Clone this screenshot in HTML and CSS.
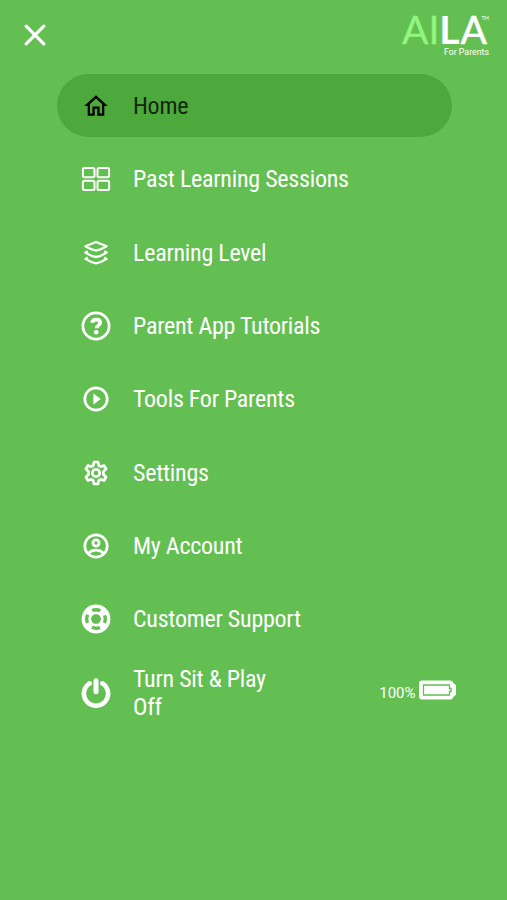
FILE: index.html
```html
<!DOCTYPE html>
<html lang="en">
<head>
  <meta charset="UTF-8">
  <meta name="viewport" content="width=device-width, initial-scale=1.0">
  <title>AILA For Parents</title>
  <link rel="stylesheet" href="styles.css">
</head>
<body>
  <!-- Header -->
  <header>
    <button class="close" aria-label="Close menu">
      <svg width="22" height="22" viewBox="0 0 22 22"><path d="M2.2 2.2l17.6 17.6M19.8 2.2L2.2 19.8" /></svg>
    </button>
    <div class="logo">
      <div class="logo-name"><span class="logo-ai">AI</span><span class="logo-l">L</span><span class="logo-a">A</span><span class="tm">TM</span></div>
      <div class="logo-sub">For Parents</div>
    </div>
  </header>

  <!-- Menu -->
  <nav>
    <a class="item active" href="#">
      <svg class="icon" viewBox="0 0 30 30"><path class="fill" fill-rule="evenodd" d="M15 4.3L3.2 15h3.5v9.8h7v-7h2.6v7h7V15h3.5zM15 7.5l6 5.4v9.6h-2.4v-7h-7.2v7H9v-9.6z" /></svg>
      <span class="label">Home</span>
    </a>
    <a class="item" href="#">
      <svg class="icon" viewBox="0 0 30 30">
        <g class="line thin">
          <rect x="1.9" y="4" width="11.6" height="9.2" rx="1.5" />
          <rect x="16.5" y="4" width="11.6" height="9.2" rx="1.5" />
          <rect x="1.9" y="16.7" width="11.6" height="9.2" rx="1.5" />
          <rect x="16.5" y="16.7" width="11.6" height="9.2" rx="1.5" />
        </g>
      </svg>
      <span class="label">Past Learning Sessions</span>
    </a>
    <a class="item" href="#">
      <svg class="icon" viewBox="0 0 30 30">
        <g class="line layer">
          <path d="M15 4L25.6 8.3Q20 11.8 15 12.6 10 11.8 4.4 8.3z" />
          <path d="M6.8 13.3l-2.4 1.3Q10 18.2 15 19q5-.8 10.6-4.4l-2.4-1.3" />
          <path d="M6.8 19.6l-2.4 1.3Q10 24.5 15 25.3q5-.8 10.6-4.4l-2.4-1.3" />
        </g>
      </svg>
      <span class="label">Learning Level</span>
    </a>
    <a class="item" href="#">
      <svg class="icon" viewBox="0 0 30 30">
        <circle class="line" cx="15" cy="15" r="13.1" />
        <path class="line mark" d="M10.9 11.7C11.4 9.7 13 8.6 15.2 8.6c2.3 0 4 1.2 4 3.2 0 2.7-3.8 2.7-3.8 5.4" />
        <circle class="fill" cx="15.2" cy="21.3" r="2.3" />
      </svg>
      <span class="label">Parent App Tutorials</span>
    </a>
    <a class="item" href="#">
      <svg class="icon" viewBox="0 0 30 30">
        <circle class="line" cx="15" cy="15" r="11.2" />
        <path class="fill" d="M12.4 9.6v10.8l7.4-5.4z" />
      </svg>
      <span class="label">Tools For Parents</span>
    </a>
    <a class="item" href="#">
      <svg class="icon" viewBox="0 0 30 30">
        <path class="line" d="M13 4h4l.7 3.5 2 1.1 3.4-1.1 2 3.5-2.7 2.4v3.2l2.7 2.4-2 3.5-3.4-1.1-2 1.1L17 26h-4l-.7-3.5-2-1.1-3.4 1.1-2-3.5 2.7-2.4v-3.2L4.9 11l2-3.5 3.4 1.1 2-1.1z" />
        <circle class="line" cx="15" cy="15" r="3.7" />
      </svg>
      <span class="label">Settings</span>
    </a>
    <a class="item" href="#">
      <svg class="icon" viewBox="0 0 30 30">
        <circle class="line" cx="15" cy="15" r="11.2" />
        <circle class="line" cx="15" cy="12" r="3.1" />
        <path class="line" d="M7.3 22.2c4.4-4 11-4 15.4 0" />
      </svg>
      <span class="label">My Account</span>
    </a>
    <a class="item" href="#">
      <svg class="icon" viewBox="0 0 30 30">
        <circle class="ring" cx="15" cy="15" r="9.6" />
        <circle class="cut" cx="15" cy="15" r="9.3" />
        <circle class="hub" cx="15" cy="15" r="4.5" />
      </svg>
      <span class="label">Customer Support</span>
    </a>
    <a class="item" href="#">
      <svg class="icon" viewBox="0 0 30 30">
        <path class="line power" d="M8.7 5.3a12.1 12.1 0 1 0 12.6 0" />
        <path class="line power stem" d="M15 2.8v11" />
      </svg>
      <span class="label">Turn Sit &amp; Play<br>Off</span>
      <span class="battery">
        <span class="percent">100%</span>
        <svg width="38" height="20" viewBox="0 0 38 20">
          <path class="fill" d="M3 .5h28.3q2.5 0 3.2 2.7l2.5 2v9.6l-2.5 2q-.7 2.7-3.2 2.7H3Q0 19.5 0 16.5v-13Q0 .5 3 .5z" />
          <path class="gauge" d="M4.5 5h26v3.500H32v3h-1.500V15h-26z" />
        </svg>
      </span>
    </a>
  </nav>
</body>
</html>
```

FILE: styles.css
```css
/* Global Styles */
* {
  box-sizing: border-box;
}

body {
  margin: 0;
  min-height: 900px;
  background-color: #63bf51;
  color: #fff;
  font-family: Roboto, sans-serif;
}

/* Header */
header {
  display: flex;
  justify-content: space-between;
  height: 74.4px;
  padding: 10px 18px 0 24px;
}

.close {
  width: 22px;
  height: 22px;
  margin-top: 14px;
  padding: 0;
  border: none;
  background: none;
  cursor: pointer;
}

.close svg {
  display: block;
  fill: none;
  stroke: #fff;
  stroke-width: 3.2;
  stroke-linecap: round;
}

/* Logo */
.logo {
  position: relative;
  width: 87px;
}

.logo-name {
  height: 35.5px;
  font-family: Lato, sans-serif;
  font-size: 39px;
  line-height: 39px;
  white-space: nowrap;
}

.logo-ai {
  color: #92f57e;
  -webkit-text-stroke: 0.3px #92f57e;
}

.logo-l {
  font-weight: 700;
}

.logo-a {
  margin-left: 1px;
  -webkit-text-stroke: 0.5px #fff;
}

.tm {
  position: absolute;
  top: 5px;
  right: 0;
  font-size: 5px;
  line-height: 6px;
}

.logo-sub {
  font-size: 8.8px;
  line-height: 13px;
  text-align: right;
  white-space: nowrap;
}

/* Menu */
nav {
  display: flex;
  flex-direction: column;
  gap: 10.35px;
  margin: 0 51px 0 56.5px;
}

.item {
  display: flex;
  align-items: center;
  width: 395px;
  height: 63px;
  padding-left: 24.5px;
  border-radius: 32px;
  color: #fff;
  text-decoration: none;
}

.active {
  background-color: #4da93b;
  color: #12270e;
}

.active .icon {
  color: #000;
}

.label {
  margin-left: 22px;
  font-family: "Roboto Condensed", Roboto, sans-serif;
  font-size: 24px;
  font-stretch: 75%;
  font-weight: 430;
  letter-spacing: -0.26px;
  line-height: 28px;
  white-space: nowrap;
}

/* Icons */
.icon {
  width: 30px;
  height: 30px;
  flex-shrink: 0;
}

.fill {
  fill: currentColor;
}

.line {
  fill: none;
  stroke: currentColor;
  stroke-width: 2.7;
  stroke-linejoin: round;
}

.thin {
  stroke-width: 2;
}

.layer {
  stroke-width: 2.3;
}

.mark {
  stroke-width: 3.6;
}

.ring {
  fill: none;
  stroke: currentColor;
  stroke-width: 9.6;
}

.cut {
  fill: none;
  stroke: #63bf51;
  stroke-width: 3.4;
  stroke-dasharray: 8.3 6.308;
  stroke-dashoffset: 4.15;
}

.hub {
  fill: #63bf51;
}

.power {
  stroke-width: 4.6;
  stroke-linecap: round;
}

.stem {
  stroke-width: 5;
}

/* Battery */
.battery {
  display: flex;
  align-items: center;
  margin: -5px -5px 0 auto;
}

.percent {
  margin: 5px 3px 0 0;
  font-size: 15px;
  line-height: 18px;
}

.gauge {
  fill: none;
  stroke: #63bf51;
  stroke-width: 1.3;
}
```
